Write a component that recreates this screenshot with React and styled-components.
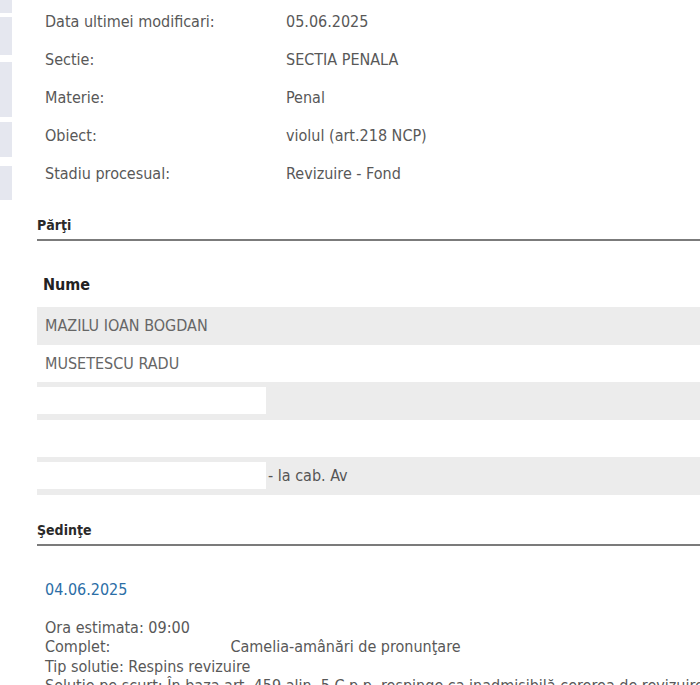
import React from "react";
import styled, { createGlobalStyle } from "styled-components";

const Global = createGlobalStyle`
  html, body { margin: 0; padding: 0; background: #fff; overflow: hidden; }
  body { font-family: "DejaVu Sans Condensed", "DejaVu Sans", sans-serif; }
`;

const Page = styled.div`
  display: flex;
  width: 700px;
  height: 685px;
  overflow: hidden;
`;

const SideStrip = styled.div`
  width: 12px;
  flex: none;
  display: flex;
  flex-direction: column;
`;

const SideBox = styled.div`
  height: ${(p) => p.$h}px;
  margin-top: ${(p) => p.$gap}px;
  background: #e5e7ef;
`;

const Main = styled.div`
  flex: 1;
  padding-left: 25px;
  padding-top: 2px;
  min-width: 0;
`;

const InfoGrid = styled.div`
  display: grid;
  grid-template-columns: 249px 1fr;
  grid-auto-rows: 38px;
  align-items: center;
  font-size: 16px;
  color: #585858;
`;

const InfoLabel = styled.div`
  padding-left: 8px;
`;

const InfoValue = styled.div``;

const SectionTitle = styled.div`
  margin-top: ${(p) => p.$mt}px;
  font-size: 14px;
  font-weight: bold;
  line-height: 20px;
  color: #2a2a2a;
  padding-bottom: 4px;
  border-bottom: 2px solid #7b7b7b;
`;

const TableHead = styled.div`
  margin-top: 26px;
  height: 40px;
  box-sizing: border-box;
  padding: 8px 0 0 6px;
  line-height: 20px;
  font-size: 16px;
  font-weight: bold;
  color: #222;
`;

const Row = styled.div`
  height: 37.5px;
  display: flex;
  align-items: center;
  background: ${(p) => (p.$alt ? "#ececec" : "transparent")};
  font-size: 16px;
  color: #666;
`;

const RowText = styled.span`
  padding-left: 8px;
`;

const Redacted = styled.span`
  display: inline-block;
  width: 229px;
  height: 27px;
  background: #fff;
  flex: none;
`;

const AfterRedacted = styled.span`
  padding-left: 2px;
  color: #555;
`;

const DateLink = styled.div`
  margin-top: 34px;
  padding-left: 8px;
  font-size: 16px;
  line-height: 20px;
  color: #2b6ea6;
`;

const Details = styled.div`
  margin-top: 18px;
  padding-left: 8px;
  font-size: 16px;
  line-height: 19.5px;
  color: #585858;
  white-space: nowrap;
`;

const DetailLine = styled.div``;

const Gap = styled.span`
  display: inline-block;
  width: ${(p) => p.$w}px;
`;

const info = [
  ["Data ultimei modificari:", "05.06.2025"],
  ["Sectie:", "SECTIA PENALA"],
  ["Materie:", "Penal"],
  ["Obiect:", "violul (art.218 NCP)"],
  ["Stadiu procesual:", "Revizuire - Fond"],
];

const side = [
  [0, 13],
  [4, 38],
  [7, 55],
  [5, 35],
  [9, 34],
];

export default function App() {
  return (
    <>
      <Global />
      <Page>
        <SideStrip>
          {side.map(([g, h], i) => (
            <SideBox key={i} $gap={g} $h={h} />
          ))}
        </SideStrip>
        <Main>
          <InfoGrid>
            {info.map(([l, v]) => (
              <React.Fragment key={l}>
                <InfoLabel>{l}</InfoLabel>
                <InfoValue>{v}</InfoValue>
              </React.Fragment>
            ))}
          </InfoGrid>

          <SectionTitle $mt={23}>Părţi</SectionTitle>
          <TableHead>Nume</TableHead>
          <Row $alt>
            <RowText>MAZILU IOAN BOGDAN</RowText>
          </Row>
          <Row>
            <RowText>MUSETESCU RADU</RowText>
          </Row>
          <Row $alt>
            <Redacted />
          </Row>
          <Row />
          <Row $alt>
            <Redacted />
            <AfterRedacted>- la cab. Av</AfterRedacted>
          </Row>

          <SectionTitle $mt={25}>Şedinţe</SectionTitle>
          <DateLink>04.06.2025</DateLink>
          <Details>
            <DetailLine>Ora estimata: 09:00</DetailLine>
            <DetailLine>
              Complet:
              <Gap $w={120} />
              Camelia-amânări de pronunţare
            </DetailLine>
            <DetailLine>Tip solutie: Respins revizuire</DetailLine>
            <DetailLine>
              Solutie pe scurt: În baza art. 459 alin. 5 C.p.p. respinge ca inadmisibilă cererea de revizuire formulată de
            </DetailLine>
          </Details>
        </Main>
      </Page>
    </>
  );
}
